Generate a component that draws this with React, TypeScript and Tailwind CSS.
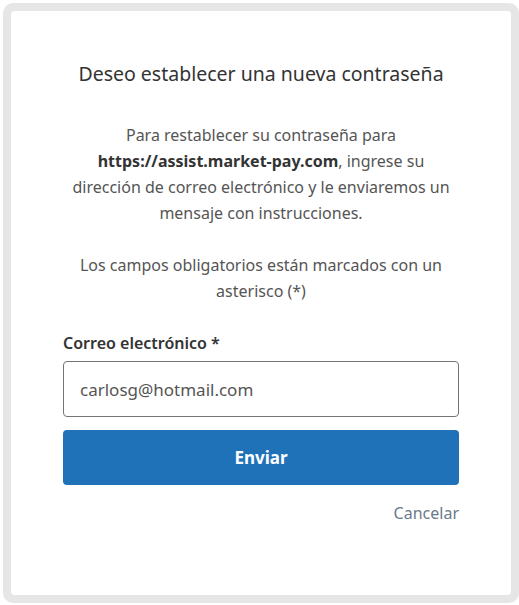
export default function App() {
  return (
    <div
      className="w-[519px] h-[605px] bg-white p-[3px]"
      style={{ fontFamily: '"Noto Sans", "Open Sans", sans-serif' }}
    >
      <div className="h-[600px] w-[516px] rounded-[10px] bg-[#e6e6e6] p-[8px]">
        <div className="flex h-full flex-col rounded-[4px] bg-white px-[52px] pt-[49px]">
          <h1 className="text-center text-[19.5px] leading-[28px] text-[#333333]">
            Deseo establecer una nueva contraseña
          </h1>
          <p className="mt-[34px] text-center text-[16px] leading-[26px] text-[#555555]">
            Para restablecer su contraseña para{" "}
            <strong className="font-bold text-[#333333]">https://assist.market-pay.com</strong>, ingrese su
            dirección de correo electrónico y le enviaremos un mensaje con instrucciones.
          </p>
          <p className="mt-[26px] text-center text-[16px] leading-[26px] text-[#555555]">
            Los campos obligatorios están marcados con un asterisco (*)
          </p>
          <label className="mt-[26px] text-[16px] font-semibold leading-[26px] text-[#333333]">
            Correo electrónico *
          </label>
          <input
            type="email"
            defaultValue="carlosg@hotmail.com"
            className="mt-[5px] h-[56px] w-full rounded-[4px] border border-[#70757a] px-[16px] text-[17px] text-[#555555] outline-none"
          />
          <button className="mt-[13px] h-[55px] w-full rounded-[4px] bg-[#1f72b8] text-[17px] font-bold text-white">
            Enviar
          </button>
          <div className="mt-[17px] text-right text-[16px] leading-[22px] text-[#6b7a8a]">
            <a href="#">Cancelar</a>
          </div>
        </div>
      </div>
    </div>
  );
}
